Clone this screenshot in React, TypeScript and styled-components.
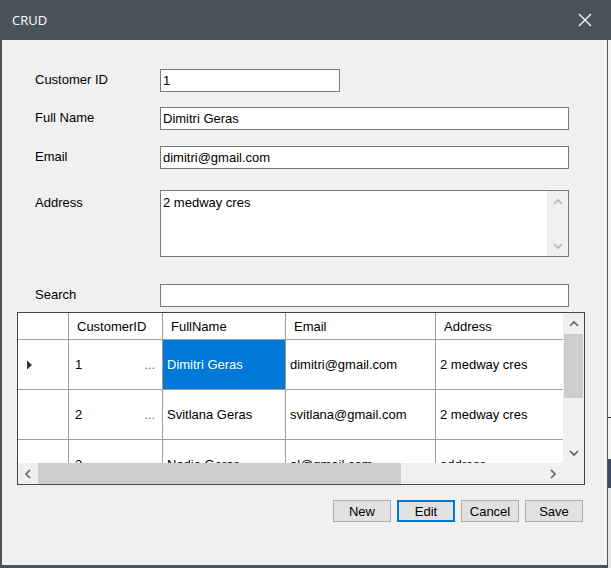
import React from "react";
import styled, { createGlobalStyle } from "styled-components";

const Global = createGlobalStyle`
  html, body { margin: 0; padding: 0; }
  body {
    width: 611px;
    height: 568px;
    overflow: hidden;
    background: #f3f3f3;
    font-family: "Liberation Sans", Arial, sans-serif;
    font-size: 13px;
    color: #000;
  }
`;

const Screen = styled.div`
  width: 611px;
  height: 568px;
  display: flex;
  flex-direction: column;
`;

const TitleBar = styled.div`
  flex: none;
  height: 40px;
  box-sizing: border-box;
  background: #4a535b;
  color: #fff;
  display: flex;
  align-items: center;
  justify-content: space-between;
  padding: 0 19px 0 12px;
`;

const Title = styled.span`
  font-family: "Open Sans", "Noto Sans", sans-serif;
  font-size: 13px;
`;

const Lower = styled.div`
  flex: 1;
  min-height: 0;
  display: flex;
`;

const Body = styled.div`
  width: 608px;
  flex: none;
  box-sizing: border-box;
  background: #f0f0f0;
  border-left: 2px solid #4a535b;
  border-right: 1px solid #50565c;
  border-bottom: 3px solid #4a535b;
  display: flex;
  flex-direction: column;
`;

const DesktopStrip = styled.div`
  flex: 1;
  display: flex;
  flex-direction: column;
`;

const Segment = styled.div<{ $h?: number; $c: string }>`
  flex: ${(p) => (p.$h ? `none` : `1`)};
  height: ${(p) => (p.$h ? `${p.$h}px` : `auto`)};
  background: ${(p) => p.$c};
`;

const Form = styled.div`
  display: flex;
  flex-direction: column;
  padding: 29px 38px 0 33px;
`;

const FormRow = styled.div<{ $gap: number }>`
  display: grid;
  grid-template-columns: 125px 1fr;
  align-items: center;
  margin-top: ${(p) => p.$gap}px;
`;

const Label = styled.label<{ $top?: boolean }>`
  line-height: 15px;
  align-self: ${(p) => (p.$top ? "start" : "center")};
  padding-top: ${(p) => (p.$top ? "5px" : "0")};
  margin-top: ${(p) => (p.$top ? "0" : "-2px")};
`;

const Input = styled.input<{ $w?: number }>`
  box-sizing: border-box;
  width: ${(p) => (p.$w ? `${p.$w}px` : "100%")};
  height: 23px;
  margin: 0;
  padding: 0 2px;
  border: 1px solid #7a7a7a;
  background: #fff;
  font-family: "Liberation Sans", Arial, sans-serif;
  font-size: 13px;
  color: #000;
  outline: none;
`;

const TextBox = styled.div`
  box-sizing: border-box;
  height: 67px;
  border: 1px solid #7a7a7a;
  background: #fff;
  display: flex;
`;

const TextContent = styled.div`
  flex: 1;
  padding: 4px 2px 0;
  line-height: 15px;
`;

const TextScroll = styled.div`
  width: 21px;
  flex: none;
  background: #f0f0f0;
  display: flex;
  flex-direction: column;
  justify-content: space-between;
`;

const GridFrame = styled.div`
  margin: 5px 0 0 15px;
  width: 568px;
  height: 173px;
  box-sizing: border-box;
  border: 1px solid #454545;
  background: #fff;
  display: grid;
  grid-template-columns: 1fr 21px;
  grid-template-rows: 1fr 21px;
`;

const Viewport = styled.div`
  overflow: hidden;
  background: #fff;
  display: flex;
  flex-direction: column;
`;

const Row = styled.div<{ $h: number }>`
  flex: none;
  height: ${(p) => p.$h}px;
  display: flex;
`;

const Cell = styled.div<{ $w: number; $pad: number; $sel?: boolean }>`
  flex: none;
  width: ${(p) => p.$w}px;
  box-sizing: border-box;
  border-right: 1px solid #a0a0a0;
  border-bottom: 1px solid #a0a0a0;
  padding: 0 7px 0 ${(p) => p.$pad}px;
  display: flex;
  align-items: center;
  justify-content: space-between;
  white-space: nowrap;
  overflow: hidden;
  background: ${(p) => (p.$sel ? "#0078d7" : "#fff")};
  color: ${(p) => (p.$sel ? "#fff" : "#000")};
  line-height: 15px;
`;

const Dots = styled.span`
  color: #6d6d6d;
`;

const VScroll = styled.div`
  background: #f0f0f0;
  display: flex;
  flex-direction: column;
`;

const HScroll = styled.div`
  background: #f0f0f0;
  display: flex;
`;

const Corner = styled.div`
  background: #f0f0f0;
`;

const ArrowBox = styled.div<{ $w?: number; $h?: number }>`
  flex: none;
  width: ${(p) => (p.$w ? `${p.$w}px` : "auto")};
  height: ${(p) => (p.$h ? `${p.$h}px` : "auto")};
  display: flex;
  align-items: center;
  justify-content: center;
`;

const Track = styled.div<{ $dir: "row" | "column" }>`
  flex: 1;
  display: flex;
  flex-direction: ${(p) => p.$dir};
`;

const Thumb = styled.div<{ $w?: number; $h?: number }>`
  flex: none;
  background: #cdcdcd;
  ${(p) => (p.$h ? `height: ${p.$h}px; margin: 0 1px;` : "")}
  ${(p) => (p.$w ? `width: ${p.$w}px; margin: 0;` : "")}
`;

const ButtonBar = styled.div`
  display: flex;
  justify-content: flex-end;
  gap: 6px;
  padding-right: 24px;
  margin-top: 15px;
`;

const Button = styled.button<{ $focus?: boolean }>`
  width: 58px;
  height: 22px;
  box-sizing: border-box;
  padding: 0;
  margin: 0;
  background: #e1e1e1;
  border: ${(p) => (p.$focus ? "2px solid #0078d7" : "1px solid #adadad")};
  font-family: "Liberation Sans", Arial, sans-serif;
  font-size: 13px;
  color: #000;
`;

type Dir = "up" | "down" | "left" | "right";

const Chevron: React.FC<{ dir: Dir; color?: string }> = ({ dir, color = "#606060" }) => {
  const pts: Record<Dir, string> = {
    up: "1,6 5,2 9,6",
    down: "1,2 5,6 9,2",
    left: "6,1 2,5 6,9",
    right: "2,1 6,5 2,9",
  };
  const vertical = dir === "up" || dir === "down";
  return (
    <svg width={vertical ? 10 : 8} height={vertical ? 8 : 10} viewBox={vertical ? "0 0 10 8" : "0 0 8 10"}>
      <polyline points={pts[dir]} fill="none" stroke={color} strokeWidth={1.6} />
    </svg>
  );
};

const CloseIcon = () => (
  <svg width="14" height="14" viewBox="0 0 14 14">
    <path d="M1 1 L13 13 M13 1 L1 13" stroke="#fff" strokeWidth="1.2" fill="none" />
  </svg>
);

const RowMarker = () => (
  <svg width="6" height="10" viewBox="0 0 6 10">
    <path d="M0 0.5 L5 5 L0 9.5 Z" fill="#333" />
  </svg>
);

const widths = [51, 94, 123, 150, 150];
const headers = ["", "CustomerID", "FullName", "Email", "Address"];
const rows = [
  ["1", "Dimitri Geras", "dimitri@gmail.com", "2 medway cres"],
  ["2", "Svitlana Geras", "svitlana@gmail.com", "2 medway cres"],
  ["3", "Nadia Geras", "al@gmail.com", "address"],
];

export default function App() {
  return (
    <>
      <Global />
      <Screen>
        <TitleBar>
          <Title>CRUD</Title>
          <CloseIcon />
        </TitleBar>
        <Lower>
          <Body>
            <Form>
              <FormRow $gap={0}>
                <Label>Customer ID</Label>
                <Input $w={180} readOnly value="1" />
              </FormRow>
              <FormRow $gap={15}>
                <Label>Full Name</Label>
                <Input readOnly value="Dimitri Geras" />
              </FormRow>
              <FormRow $gap={16}>
                <Label>Email</Label>
                <Input readOnly value="dimitri@gmail.com" />
              </FormRow>
              <FormRow $gap={21}>
                <Label $top>Address</Label>
                <TextBox>
                  <TextContent>2 medway cres</TextContent>
                  <TextScroll>
                    <ArrowBox $h={21}>
                      <Chevron dir="up" color="#b4b4b4" />
                    </ArrowBox>
                    <ArrowBox $h={21}>
                      <Chevron dir="down" color="#b4b4b4" />
                    </ArrowBox>
                  </TextScroll>
                </TextBox>
              </FormRow>
              <FormRow $gap={27}>
                <Label>Search</Label>
                <Input readOnly value="" />
              </FormRow>
            </Form>

            <GridFrame>
              <Viewport>
                <Row $h={27}>
                  {headers.map((h, i) => (
                    <Cell key={i} $w={widths[i]} $pad={8}>
                      {h}
                    </Cell>
                  ))}
                </Row>
                {rows.map((r, ri) => (
                  <Row key={ri} $h={50}>
                    <Cell $w={widths[0]} $pad={9}>
                      {ri === 0 ? <RowMarker /> : null}
                    </Cell>
                    {r.map((v, ci) => (
                      <Cell
                        key={ci}
                        $w={widths[ci + 1]}
                        $pad={ci === 0 ? 6 : 4}
                        $sel={ri === 0 && ci === 1}
                      >
                        <span>{v}</span>
                        {ci === 0 ? <Dots>...</Dots> : null}
                      </Cell>
                    ))}
                  </Row>
                ))}
              </Viewport>
              <VScroll>
                <ArrowBox $h={21}>
                  <Chevron dir="up" />
                </ArrowBox>
                <Track $dir="column">
                  <Thumb $h={64} />
                </Track>
                <ArrowBox $h={20}>
                  <Chevron dir="down" />
                </ArrowBox>
              </VScroll>
              <HScroll>
                <ArrowBox $w={20}>
                  <Chevron dir="left" />
                </ArrowBox>
                <Track $dir="row">
                  <Thumb $w={363} />
                </Track>
                <ArrowBox $w={21}>
                  <Chevron dir="right" />
                </ArrowBox>
              </HScroll>
              <Corner />
            </GridFrame>

            <ButtonBar>
              <Button>New</Button>
              <Button $focus>Edit</Button>
              <Button>Cancel</Button>
              <Button>Save</Button>
            </ButtonBar>
          </Body>
          <DesktopStrip>
            <Segment $h={377} $c="#f3f3f3" />
            <Segment $h={1} $c="#303030" />
            <Segment $h={41} $c="#f3f3f3" />
            <Segment $h={29} $c="#3b4a5c" />
            <Segment $c="#e6e6e6" />
          </DesktopStrip>
        </Lower>
      </Screen>
    </>
  );
}
